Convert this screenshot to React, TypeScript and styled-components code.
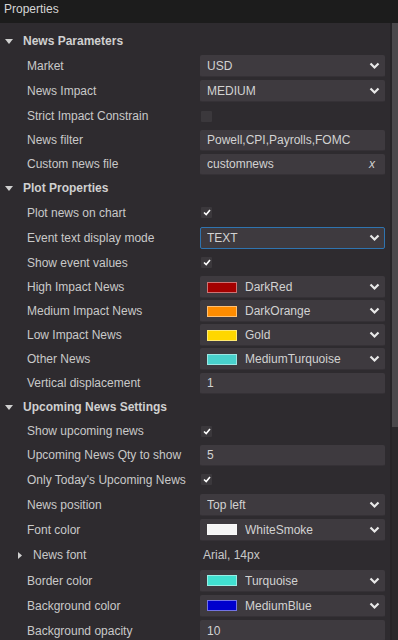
import React from "react";
import styled, { createGlobalStyle } from "styled-components";

const Global = createGlobalStyle`
  html, body { margin: 0; padding: 0; background: #2e2b2f; }
  body { font-family: "Liberation Sans", Arial, sans-serif; font-size: 12px; }
  * { box-sizing: border-box; }
`;

const Panel = styled.div`
  width: 398px;
  height: 640px;
  overflow: hidden;
  display: flex;
  flex-direction: column;
  background: #2e2b2f;
  color: #c9c9c9;
`;

const TitleBar = styled.div`
  height: 23px;
  flex: none;
  background: #1c1c1c;
  color: #d6d6d6;
  padding: 2px 0 0 4px;
  line-height: 14px;
  font-size: 12px;
`;

const Body = styled.div`
  flex: 1;
  display: flex;
  min-height: 0;
`;

const Content = styled.div`
  flex: 1;
  padding-top: 6px;
  display: flex;
  flex-direction: column;
`;

const ScrollTrack = styled.div`
  width: 8px;
  flex: none;
  background: #2a282b;
  border-left: 2px solid #262427;
  display: flex;
  flex-direction: column;
`;

const ScrollThumb = styled.div`
  height: 404px;
  background: #4a484b;
`;

const Row = styled.div<{ $h: number }>`
  height: ${(p) => p.$h}px;
  flex: none;
  display: grid;
  grid-template-columns: 200px 185px;
  align-items: center;
`;

const Label = styled.div<{ $indent?: number }>`
  padding-left: ${(p) => p.$indent ?? 27}px;
  color: #c9c9c9;
  white-space: nowrap;
  display: flex;
  align-items: center;
  gap: 11px;
`;

const SectionRow = styled.div<{ $h: number }>`
  height: ${(p) => p.$h}px;
  flex: none;
  display: flex;
  align-items: center;
  padding-left: 5px;
  gap: 10px;
  font-weight: bold;
  color: #d0d0d0;
`;

const Box = styled.div<{ $focus?: boolean; $h?: number }>`
  height: ${(p) => p.$h ?? 22}px;
  background: #3e3a3f;
  border-radius: 2px;
  border: 1px solid ${(p) => (p.$focus ? "#2f74b0" : "transparent")};
  border-bottom-color: ${(p) => (p.$focus ? "#2f74b0" : "#353136")};
  display: flex;
  align-items: center;
  padding: 0 4px 0 6px;
  color: #d2d2d2;
  white-space: nowrap;
`;

const BoxText = styled.span`
  flex: 1;
  overflow: hidden;
`;

const Swatch = styled.span<{ $c: string }>`
  width: 30px;
  height: 11px;
  flex: none;
  background: ${(p) => p.$c};
  border: 1px solid rgba(255, 255, 255, 0.45);
  margin-right: 8px;
`;

const ClearX = styled.span`
  font-style: italic;
  color: #d0d0d0;
  padding-right: 5px;
  font-size: 12px;
`;

const Check = styled.div`
  width: 11px;
  height: 11px;
  margin-left: 1px;
  background: #3b383c;
  border-radius: 1px;
  display: flex;
  align-items: center;
  justify-content: center;
`;

const Plain = styled.div`
  padding-left: 3px;
  color: #c9c9c9;
`;

const Chevron = () => (
  <svg width="11" height="8" viewBox="0 0 11 8">
    <polyline points="1.5,1.5 5.5,5.5 9.5,1.5" fill="none" stroke="#e8e8e8" strokeWidth="2.2" />
  </svg>
);

const TriDown = () => (
  <svg width="8" height="5" viewBox="0 0 8 5">
    <polygon points="0,0 8,0 4,5" fill="#d0d0d0" />
  </svg>
);

const TriRight = () => (
  <svg width="4" height="7" viewBox="0 0 4 7">
    <polygon points="0,0 4,3.5 0,7" fill="#d0d0d0" />
  </svg>
);

const CheckMark = () => (
  <svg width="8" height="7" viewBox="0 0 8 7">
    <polyline points="1,3.5 3.2,5.5 7,1" fill="none" stroke="#ffffff" strokeWidth="1.6" />
  </svg>
);

type Val =
  | { kind: "select"; text: string; focus?: boolean }
  | { kind: "text"; text: string; clear?: boolean }
  | { kind: "check"; on: boolean }
  | { kind: "color"; text: string; color: string }
  | { kind: "plain"; text: string };

type Item =
  | { type: "section"; title: string; h: number }
  | { type: "prop"; label: string; h: number; value: Val; sub?: boolean };

const items: Item[] = [
  { type: "section", title: "News Parameters", h: 24 },
  { type: "prop", label: "Market", h: 25, value: { kind: "select", text: "USD" } },
  { type: "prop", label: "News Impact", h: 26, value: { kind: "select", text: "MEDIUM" } },
  { type: "prop", label: "Strict Impact Constrain", h: 24, value: { kind: "check", on: false } },
  { type: "prop", label: "News filter", h: 24, value: { kind: "text", text: "Powell,CPI,Payrolls,FOMC" } },
  { type: "prop", label: "Custom news file", h: 24, value: { kind: "text", text: "customnews", clear: true } },
  { type: "section", title: "Plot Properties", h: 24 },
  { type: "prop", label: "Plot news on chart", h: 25, value: { kind: "check", on: true } },
  { type: "prop", label: "Event text display mode", h: 25, value: { kind: "select", text: "TEXT", focus: true } },
  { type: "prop", label: "Show event values", h: 25, value: { kind: "check", on: true } },
  { type: "prop", label: "High Impact News", h: 24, value: { kind: "color", text: "DarkRed", color: "#a40000" } },
  { type: "prop", label: "Medium Impact News", h: 24, value: { kind: "color", text: "DarkOrange", color: "#ff8c00" } },
  { type: "prop", label: "Low Impact News", h: 24, value: { kind: "color", text: "Gold", color: "#ffd700" } },
  { type: "prop", label: "Other News", h: 24, value: { kind: "color", text: "MediumTurquoise", color: "#48d1cc" } },
  { type: "prop", label: "Vertical displacement", h: 24, value: { kind: "text", text: "1" } },
  { type: "section", title: "Upcoming News Settings", h: 24 },
  { type: "prop", label: "Show upcoming news", h: 24, value: { kind: "check", on: true } },
  { type: "prop", label: "Upcoming News Qty to show", h: 24, value: { kind: "text", text: "5" } },
  { type: "prop", label: "Only Today's Upcoming News", h: 25, value: { kind: "check", on: true } },
  { type: "prop", label: "News position", h: 25, value: { kind: "select", text: "Top left" } },
  { type: "prop", label: "Font color", h: 25, value: { kind: "color", text: "WhiteSmoke", color: "#f5f5f5" } },
  { type: "prop", label: "News font", h: 26, sub: true, value: { kind: "plain", text: "Arial, 14px" } },
  { type: "prop", label: "Border color", h: 25, value: { kind: "color", text: "Turquoise", color: "#40e0d0" } },
  { type: "prop", label: "Background color", h: 25, value: { kind: "color", text: "MediumBlue", color: "#0000cd" } },
  { type: "prop", label: "Background opacity", h: 25, value: { kind: "text", text: "10" } },
];

const ValueCell = ({ v }: { v: Val }) => {
  switch (v.kind) {
    case "select":
      return (
        <Box $focus={v.focus}>
          <BoxText>{v.text}</BoxText>
          <Chevron />
        </Box>
      );
    case "text":
      return (
        <Box $h={21}>
          <BoxText>{v.text}</BoxText>
          {v.clear && <ClearX>x</ClearX>}
        </Box>
      );
    case "check":
      return <Check>{v.on && <CheckMark />}</Check>;
    case "color":
      return (
        <Box>
          <Swatch $c={v.color} />
          <BoxText>{v.text}</BoxText>
          <Chevron />
        </Box>
      );
    case "plain":
      return <Plain>{v.text}</Plain>;
  }
};

export default function App() {
  return (
    <>
      <Global />
      <Panel>
        <TitleBar>Properties</TitleBar>
        <Body>
          <Content>
            {items.map((it, i) =>
              it.type === "section" ? (
                <SectionRow key={i} $h={it.h}>
                  <TriDown />
                  <span>{it.title}</span>
                </SectionRow>
              ) : (
                <Row key={i} $h={it.h}>
                  {it.sub ? (
                    <Label $indent={18}>
                      <TriRight />
                      <span>{it.label}</span>
                    </Label>
                  ) : (
                    <Label>{it.label}</Label>
                  )}
                  <ValueCell v={it.value} />
                </Row>
              )
            )}
          </Content>
          <ScrollTrack>
            <ScrollThumb />
          </ScrollTrack>
        </Body>
      </Panel>
    </>
  );
}
